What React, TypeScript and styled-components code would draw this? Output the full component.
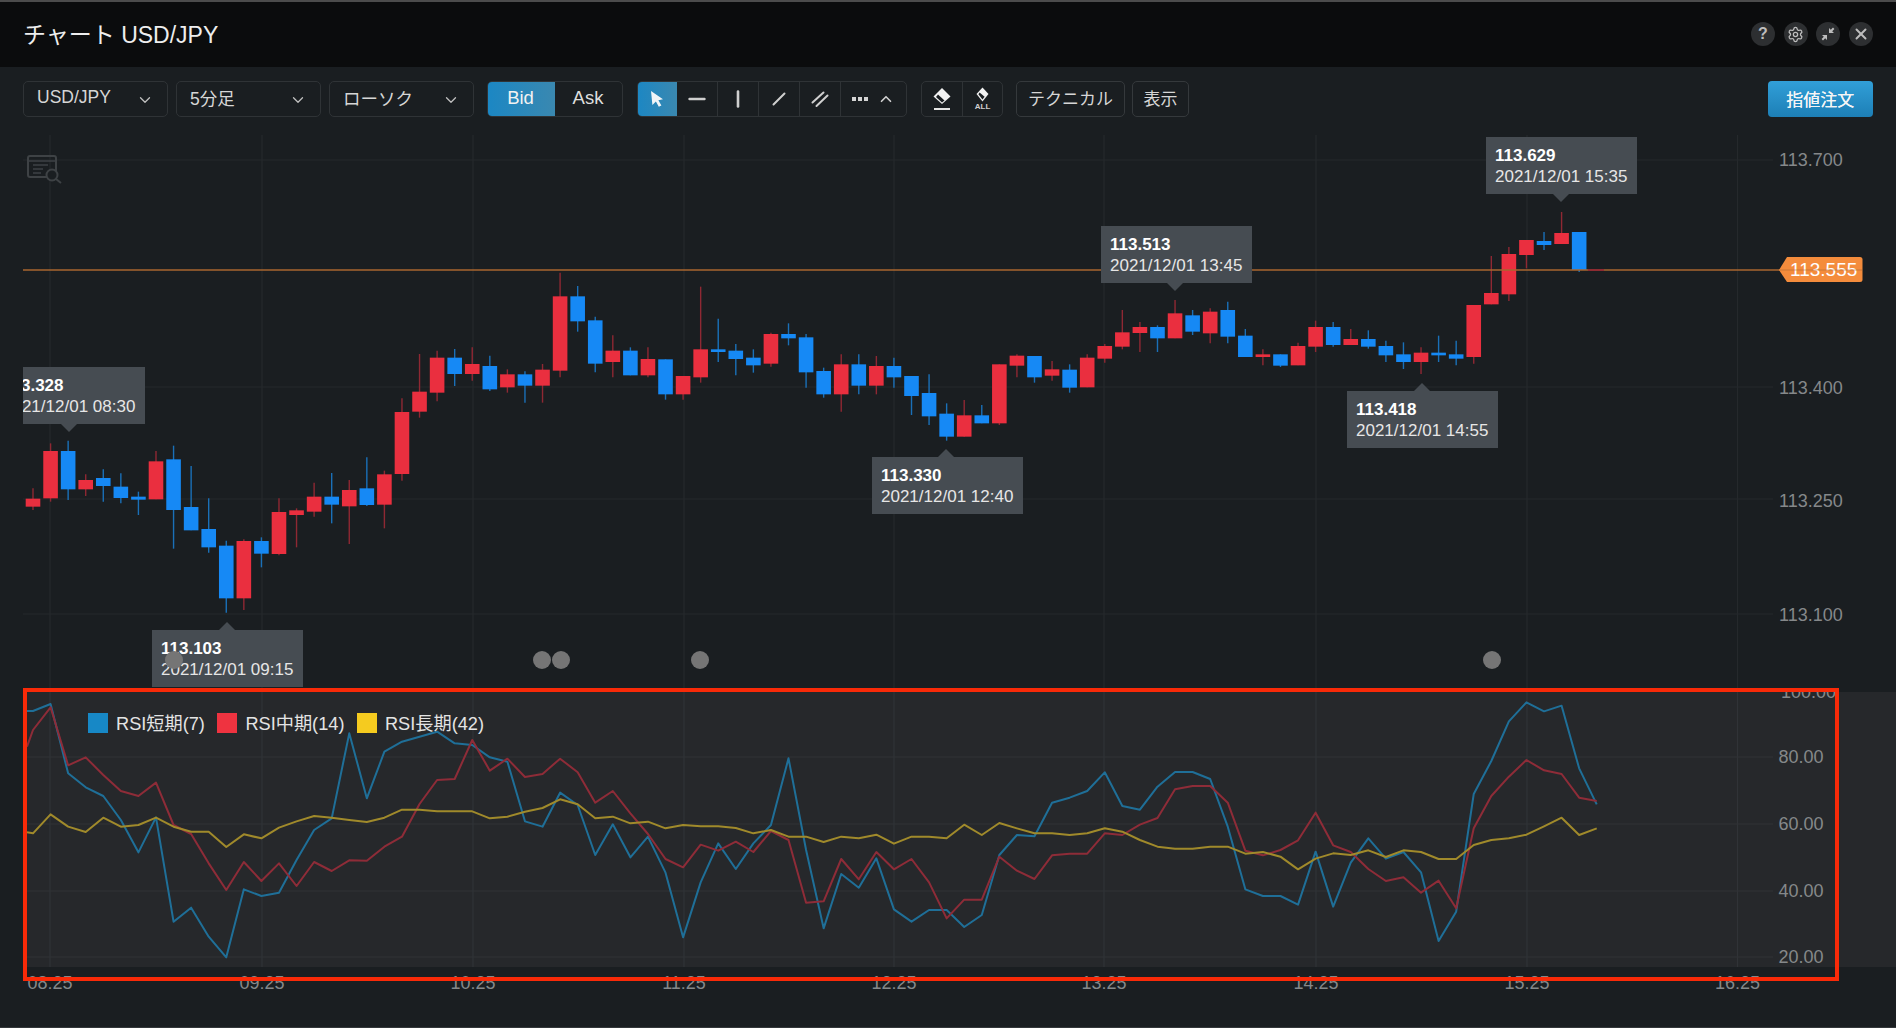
import React from 'react';
import styled, { createGlobalStyle } from 'styled-components';
import { ChevronDown, ChevronUp, Settings, X } from 'lucide-react';

const FONT = `"Liberation Sans", "Noto Sans CJK JP", sans-serif`;
const BG = '#1a1e21';

const Global = createGlobalStyle`
  html, body { margin: 0; padding: 0; background: ${BG}; }
  body { font-family: ${FONT}; overflow: hidden; }
`;

const Page = styled.div`
  width: 1896px; height: 1028px; display: flex; flex-direction: column;
  background: ${BG}; color: #ddd; box-sizing: border-box;
  border-bottom: 1px solid #34383b;
`;
const TitleBar = styled.header`
  height: 67px; flex: none; box-sizing: border-box; display: flex; align-items: center; justify-content: space-between;
  background: #0b0c0d; border-top: 2px solid #4c4c4c; padding: 0 24px 2px 23px;
`;
const Title = styled.h1`
  margin: 0 0 2px; font-size: 23px; font-weight: 400; color: #eee;
`;
const WindowActions = styled.div`
  display: flex; gap: 8.5px; margin: 1px -0.5px 0 0;
`;
const RoundBtn = styled.button`
  width: 24px; height: 24px; border-radius: 50%; border: 0; padding: 0; background: #2d2f31;
  color: #bdbdbd; display: flex; align-items: center; justify-content: center;
  font: 700 16px ${FONT};
`;

const Toolbar = styled.div`
  height: 50px; flex: none; box-sizing: border-box; padding: 14px 23px 0 23px;
  display: flex; gap: 14px; align-items: stretch;
`;
const SelectGroup = styled.div`display: flex; gap: 8px; margin-right: -1px;`;
const Select = styled.div`
  width: 145px; box-sizing: border-box; border: 1.5px solid #2f3336; border-radius: 5px;
  padding: 0 13px 3px; display: flex; align-items: center; justify-content: space-between;
  font-size: 17.5px; color: #d6d6d6;
  svg { margin-top: 4px; color: #c0c0c0; }
`;
const Segment = styled.div`
  display: flex; border: 1.5px solid #2f3336; border-radius: 5px; overflow: hidden; box-sizing: border-box;
`;
const SegBtn = styled.div<{ $w: number; $on?: boolean }>`
  width: ${p => p.$w}px; box-sizing: border-box; display: flex; align-items: center; justify-content: center;
  padding-bottom: 2px; font-size: 18.5px; color: ${p => (p.$on ? '#f2f2f2' : '#dedede')};
  background: ${p => (p.$on ? 'linear-gradient(90deg, #1b87c4, #3a88b0)' : 'transparent')};
  margin: ${p => (p.$on ? '-1.5px 0 -1.5px -1.5px' : '0')};
`;
const ToolBtn = styled.div<{ $w: number; $on?: boolean; $last?: boolean }>`
  width: ${p => p.$w}px; box-sizing: border-box; display: flex; align-items: center; justify-content: center;
  gap: 9px; color: #cfcfcf;
  background: ${p => (p.$on ? 'linear-gradient(90deg, #1b87c4, #3a88b0)' : 'transparent')};
  border-right: ${p => (p.$last || p.$on ? '0' : '1.5px solid #2f3336')};
  margin: ${p => (p.$on ? '-1.5px 0 -1.5px -1.5px' : '0')};
`;
const EraseStack = styled.div`
  display: flex; flex-direction: column; align-items: center; line-height: 1;
`;
const AllTag = styled.span`
  font-size: 8px; font-weight: 700; color: #cfcfcf; letter-spacing: 0; margin-top: 1px;
`;
const TextGroup = styled.div`display: flex; gap: 7px; margin-left: -1px;`;
const TextBtn = styled.div<{ $w: number }>`
  width: ${p => p.$w}px; box-sizing: border-box; border: 1.5px solid #35393c; border-radius: 5px;
  padding-bottom: 3px; display: flex; align-items: center; justify-content: center; font-size: 17px; color: #d6d6d6;
`;
const OrderBtn = styled.button`
  margin-left: auto; width: 105.5px; border: 0; border-radius: 4px; padding: 0 0 2px;
  background: linear-gradient(180deg, #319fd8, #1d7fb6); color: #f4f4f4; font: 400 17px ${FONT};
  text-shadow: 0 0 0.6px #fff;
`;

const ChartArea = styled.section`
  position: relative; flex: 1; display: flex; flex-direction: column;
`;
const MainPlot = styled.div`
  position: relative; height: 575px; flex: none;
  svg { display: block; }
`;
const PlotOverlay = styled.div`
  position: absolute; left: 23px; top: 0; right: 0; bottom: 0; overflow: hidden;
`;
const Tip = styled.div<{ $x: number; $y: number; $dir: 'up' | 'down'; $ax: number }>`
  position: absolute; left: ${p => p.$x - 23}px; top: ${p => p.$y - 117}px;
  width: 151px; height: 57px; box-sizing: border-box; padding: 8px 0 0 9px;
  background: #464c52; font-size: 17px; line-height: 21px; color: #e6e6e6; white-space: nowrap;
  &::after {
    content: ''; position: absolute; left: ${p => p.$ax - p.$x - 8}px;
    ${p => (p.$dir === 'up' ? 'top: -8px;' : 'bottom: -8px;')}
    border-left: 8px solid transparent; border-right: 8px solid transparent;
    ${p => (p.$dir === 'up' ? 'border-bottom: 8px solid #464c52;' : 'border-top: 8px solid #464c52;')}
  }
  b { display: block; color: #fff; font-weight: 700; }
`;
const Marker = styled.div<{ $x: number }>`
  position: absolute; left: ${p => p.$x - 32}px; top: ${660 - 117 - 9}px;
  width: 18px; height: 18px; border-radius: 50%; background: #757575;
`;

const RsiPanel = styled.div`
  position: relative; height: 275px; flex: none; margin-left: 23px; background: #26282b;
  svg { display: block; }
`;
const Legend = styled.div`
  position: absolute; left: 65px; top: 20px; display: flex; gap: 12.5px;
`;
const LegendItem = styled.div`
  display: flex; align-items: center; gap: 8px; font-size: 18.2px; color: #e4e4e4; height: 20px;
  padding-bottom: 1px;
`;
const Swatch = styled.i<{ $c: string }>`
  display: block; width: 20px; height: 20px; background: ${p => p.$c}; margin-top: 1px;
`;
const TimeAxis = styled.div`
  flex: 1; svg { display: block; }
`;
const Frame = styled.div`
  position: absolute; left: 22.5px; top: 571px; width: 1816.5px; height: 293px;
  box-sizing: border-box; border: 4.5px solid #f92a08; pointer-events: none;
`;

const GridLine = styled.line`stroke: #25292c; stroke-width: 1.2;`;
const RsiGrid = styled.line`stroke: #303337; stroke-width: 1.2;`;
const AxisText = styled.text`font: 400 18px ${FONT}; fill: #85888a;`;
const PriceLine = styled.line`stroke: #a9662f; stroke-width: 1.6;`;
const PriceTag = styled.text`font: 400 19px ${FONT}; fill: #fff;`;
const Poly = styled.polyline<{ $c: string }>`
  fill: none; stroke: ${p => p.$c}; stroke-width: 2; stroke-linejoin: round;
`;

type C = ['r' | 'b', number, number, number, number];
const candles: C[] = [
  ['r',716,740,685,750],['r',573,715,550,725],['b',573,688,542,720],['r',660,688,643,708],['b',654,678,628,725],
  ['b',680,714,640,730],['b',710,719,695,765],['r',604,718,573,718],['b',598,750,557,866],['b',741,811,618,811],
  ['b',807,862,715,878],['b',857,1015,842,1058],['r',843,1015,838,1050],['b',843,881,832,922],['r',756,882,715,886],
  ['r',751,765,745,862],['r',710,755,668,770],['b',710,734,639,790],['r',690,739,660,852],['b',685,735,592,738],
  ['r',643,734,632,805],['r',456,642,415,662],['r',395,455,282,473],['r',293,398,272,424],['b',293,342,267,378],
  ['r',312,342,262,362],['b',318,388,287,393],['r',343,382,328,398],['b',343,377,334,428],['r',329,377,312,428],
  ['r',109,332,38,352],['b',109,184,78,215],['b',181,311,170,337],['r',272,306,226,352],['b',272,346,262,346],
  ['r',297,346,262,352],['b',298,403,298,419],['r',348,403,348,419],['r',268,352,80,368],['b',268,276,176,306],
  ['b',272,297,252,346],['b',293,316,268,338],['r',222,311,218,320],['b',222,235,190,256],['b',232,337,222,383],
  ['b',333,403,323,413],['r',313,403,283,455],['b',313,377,283,403],['r',318,377,288,403],['b',318,352,293,383],
  ['b',348,408,348,465],['b',399,469,343,495],['b',461,530,430,542],['r',466,530,420,530],['b',466,490,435,490],
  ['r',313,490,313,495],['r',287,317,283,352],['b',288,352,288,368],['r',328,347,303,362],['b',329,383,313,398],
  ['r',293,382,283,382],['r',258,296,252,308],['r',217,260,150,268],['r',201,219,186,276],['b',201,235,196,276],
  ['r',160,235,120,235],['b',166,215,150,225],['r',155,220,145,250],['b',150,230,125,250],['b',227,291,207,291],
  ['r',283,291,268,316],['b',283,317,283,321],['r',258,316,248,316],['r',201,260,182,276],['b',201,255,186,260],
  ['r',237,255,207,255],['b',237,260,211,266],['b',258,286,242,306],['b',283,306,247,327],['r',278,306,262,342],
  ['b',278,286,227,306],['b',283,296,242,316],['r',135,291,135,311],['r',99,133,-12,133],['r',-18,103,-39,123],
  ['r',-60,-15,-60,25],['b',-57,-45,-84,-30],['r',-81,-48,-144,-48],['b',-84,30,-84,36],
];

const cx = (i: number) => 33 + 17.57 * i;
const cy = (v: number) => 260 + v / 3;

const blue = [93,72,280,322,348,420,517,412,725,683,770,832,628,648,638,540,450,415,160,355,215,185,170,155,190,195,232,245,424,440,338,375,525,433,532,470,578,772,
  607,490,567,490,435,235,510,745,582,623,535,688,725,690,690,741,705,525,465,469,368,353,333,277,378,389,320,276,276,297,440,628,648,
  648,674,515,680,548,475,536,516,577,783,695,342,243,124,67,94,77,265,373];
const red = [150,82,256,232,285,333,348,308,435,462,550,630,546,603,550,618,546,573,541,542,500,470,372,300,297,180,272,236,291,282,236,277,368,333,400,462,537,562,
  494,512,485,516,453,480,668,664,537,598,516,568,537,607,715,659,659,530,572,597,526,521,521,460,465,434,414,328,318,318,368,512,526,
  510,481,398,496,516,567,603,592,638,602,685,445,348,290,240,271,282,353,363];
const yellow = [460,403,440,456,413,440,435,413,440,455,455,501,463,475,443,424,408,413,420,426,413,389,389,394,394,394,415,410,395,384,358,373,415,410,430,425,445,435,
  439,439,444,460,450,470,470,486,470,475,464,491,470,470,475,434,465,429,445,460,460,465,460,445,455,480,500,506,506,500,500,521,516,
  530,568,536,520,525,511,531,511,516,537,537,495,480,475,464,439,413,465,445];

const series = (vals: number[], first: number) =>
  `27,${680 + first / 3} ` + vals.map((v, i) => `${cx(i)},${680 + v / 3}`).join(' ');

const timeXs: [string, number][] = [
  ['08:25', 50], ['09:25', 262], ['10:25', 473], ['11:25', 684], ['12:25', 894],
  ['13:25', 1104], ['14:25', 1316], ['15:25', 1527], ['16:25', 1737.5],
];
const mainRows = [160, 387, 499, 614];
const prices: [string, number][] = [['113.700', 159], ['113.400', 387], ['113.250', 500], ['113.100', 614]];
const rsiRows: [string, number, number][] = [['80.00', 757, 756], ['60.00', 824, 823], ['40.00', 891, 890], ['20.00', 957, 956]];

const tips = [
  { x: -6, y: 367, dir: 'down', ax: 69, p: '113.328', t: '2021/12/01 08:30' },
  { x: 152, y: 630, dir: 'up', ax: 227, p: '113.103', t: '2021/12/01 09:15' },
  { x: 872, y: 457, dir: 'up', ax: 946, p: '113.330', t: '2021/12/01 12:40' },
  { x: 1101, y: 226, dir: 'down', ax: 1175, p: '113.513', t: '2021/12/01 13:45' },
  { x: 1486, y: 137, dir: 'down', ax: 1560.6, p: '113.629', t: '2021/12/01 15:35' },
  { x: 1347, y: 391, dir: 'up', ax: 1422, p: '113.418', t: '2021/12/01 14:55' },
] as const;

const CompressIcon = () => (
  <svg width="16" height="16" viewBox="0 0 16 16" fill="#bdbdbd">
    <path d="M9 7V2l1.8 1.8L13 1.6l1.4 1.4-2.2 2.2L14 7z" />
    <path d="M7 9v5l-1.8-1.8L3 14.4 1.6 13l2.2-2.2L2 9z" />
  </svg>
);
const CursorIcon = () => (
  <svg width="16" height="18" viewBox="0 0 16 18" fill="#f0f4f7">
    <path d="M2 1l12 8.2-4.6 1 3 5.2-2.6 1.4-2.9-5.3L3.4 15z" />
  </svg>
);
const LineIcon = ({ d, w = 2.4 }: { d: string; w?: number }) => (
  <svg width="18" height="18" viewBox="0 0 18 18" fill="none" stroke="#cfcfcf" strokeWidth={w} strokeLinecap="round">
    <path d={d} />
  </svg>
);
const DotsIcon = () => (
  <svg width="16" height="6" viewBox="0 0 16 6" fill="#d4d4d4">
    <rect x="0" y="1" width="4" height="4" /><rect x="6" y="1" width="4" height="4" /><rect x="12" y="1" width="4" height="4" />
  </svg>
);
const EraserIcon = () => (
  <svg width="20" height="24" viewBox="0 0 20 24">
    <path d="M10 1l8.5 8.5L10 17 1.5 9.5z" fill="#f2f2f2" />
    <path d="M6 7.5l6.5 6L10 15.5 4 10z" fill="#1a1e21" />
    <rect x="2" y="21" width="16" height="2" fill="#e4e4e4" />
  </svg>
);
const SmallEraser = () => (
  <svg width="15" height="15" viewBox="0 0 15 15">
    <path d="M7.5 0.5l6 6.5-6 7.5-6-7.5z" fill="#f2f2f2" />
    <path d="M4.6 5.6l5 4.2-2.1 2.6L3.4 7.3z" fill="#1a1e21" />
  </svg>
);

export default function App() {
  return (
    <Page>
      <Global />
      <TitleBar>
        <Title>チャート USD/JPY</Title>
        <WindowActions>
          <RoundBtn>?</RoundBtn>
          <RoundBtn><Settings size={17} strokeWidth={1.8} /></RoundBtn>
          <RoundBtn><CompressIcon /></RoundBtn>
          <RoundBtn><X size={18} strokeWidth={2.6} /></RoundBtn>
        </WindowActions>
      </TitleBar>

      <Toolbar>
        <SelectGroup>
          {['USD/JPY', '5分足', 'ローソク'].map(s => (
            <Select key={s}>{s}<ChevronDown size={18} strokeWidth={1.7} /></Select>
          ))}
        </SelectGroup>
        <Segment>
          <SegBtn $w={68} $on>Bid</SegBtn>
          <SegBtn $w={67}>Ask</SegBtn>
        </Segment>
        <Segment>
          <ToolBtn $w={41} $on><CursorIcon /></ToolBtn>
          <ToolBtn $w={41}><LineIcon d="M1.5 9h15" /></ToolBtn>
          <ToolBtn $w={41}><LineIcon d="M9 1.5v15" w={2.6} /></ToolBtn>
          <ToolBtn $w={41}><LineIcon d="M3.5 14.5l11-11" w={2} /></ToolBtn>
          <ToolBtn $w={41}><LineIcon d="M1.5 12.5l11-10M5.5 16l11-10.5" w={2} /></ToolBtn>
          <ToolBtn $w={65} $last><DotsIcon /><ChevronUp size={18} strokeWidth={2.2} /></ToolBtn>
        </Segment>
        <Segment>
          <ToolBtn $w={41}><EraserIcon /></ToolBtn>
          <ToolBtn $w={39} $last>
            <EraseStack><SmallEraser /><AllTag>ALL</AllTag></EraseStack>
          </ToolBtn>
        </Segment>
        <TextGroup>
          <TextBtn $w={109}>テクニカル</TextBtn>
          <TextBtn $w={57}>表示</TextBtn>
        </TextGroup>
        <OrderBtn>指値注文</OrderBtn>
      </Toolbar>

      <ChartArea>
        <MainPlot>
          <svg width="1896" height="575" viewBox="0 117 1896 575">
            {timeXs.map(([k, x]) => <GridLine key={k} x1={x} x2={x} y1={135} y2={692} />)}
            {mainRows.map(y => <GridLine key={y} x1={23} x2={1773} y1={y} y2={y} />)}

            <g fill="none" stroke="#3e4245" strokeWidth="2">
              <rect x="28" y="156" width="28" height="21" rx="2" />
              <path d="M28 161h28M33 165h15M33 169h10M33 173h8" strokeWidth="1.6" />
              <circle cx="52" cy="175" r="5.5" fill={BG} />
              <path d="M56 179l5 4" />
            </g>

            {candles.map(([c, t, b, wt, wb], i) => {
              const x = cx(i);
              return (
                <g key={i}>
                  <line x1={x} x2={x} y1={cy(wt)} y2={cy(wb)} stroke={c === 'r' ? '#8f2833' : '#1a70b8'} strokeWidth="1.4" />
                  <rect x={x - 7.3} width={14.6} y={cy(t)} height={(b - t) / 3} fill={c === 'r' ? '#ea2f3f' : '#1689f5'} />
                </g>
              );
            })}

            <PriceLine x1={23} x2={1780} y1={270} y2={270} />
            <line x1={1588} x2={1604} y1={270} y2={270} stroke="#8f2833" strokeWidth="1.8" />
            <path d="M1779 270l8-13h73a2.5 2.5 0 0 1 2.5 2.5v20a2.5 2.5 0 0 1-2.5 2.5h-73z" fill="#f48c3c" />
            <PriceTag x={1790} y={276}>113.555</PriceTag>
            <line x1={1780} x2={1862} y1={270} y2={270} stroke="#a9662f" strokeWidth="1" opacity="0.55" />

            {prices.map(([l, y]) => <AxisText key={l} x={1779} y={y + 6.5}>{l}</AxisText>)}
          </svg>
          <PlotOverlay>
            {tips.map(t => (
              <Tip key={t.p} $x={t.x} $y={t.y} $dir={t.dir} $ax={t.ax}>
                <b>{t.p}</b>{t.t}
              </Tip>
            ))}
            {[174, 542, 561, 700, 1491.5].map(x => <Marker key={x} $x={x} />)}
          </PlotOverlay>
        </MainPlot>

        <RsiPanel>
          <svg width="1873" height="275" viewBox="23 692 1873 275">
            {timeXs.map(([k, x]) => <RsiGrid key={k} x1={x} x2={x} y1={692} y2={967} />)}
            {rsiRows.map(([l, y]) => <RsiGrid key={l} x1={23} x2={1773} y1={y} y2={y} />)}
            <Poly $c="#1f6f98" points={series(blue, 93)} />
            <Poly $c="#8e2c38" points={series(red, 200)} />
            <Poly $c="#a08a2b" points={series(yellow, 457)} />
            {rsiRows.map(([l, , c]) => <AxisText key={l} x={1778.5} y={c + 6.5}>{l}</AxisText>)}
            <AxisText x={1781} y={698}>100.00</AxisText>
          </svg>
          <Legend>
            <LegendItem><Swatch $c="#1788c6" />RSI短期(7)</LegendItem>
            <LegendItem><Swatch $c="#ef3340" />RSI中期(14)</LegendItem>
            <LegendItem><Swatch $c="#f5cb1f" />RSI長期(42)</LegendItem>
          </Legend>
        </RsiPanel>

        <TimeAxis>
          <svg width="1896" height="60" viewBox="0 967 1896 60">
            {timeXs.map(([k, x]) => <AxisText key={k} x={x} y={988.5} textAnchor="middle">{k}</AxisText>)}
          </svg>
        </TimeAxis>
        <Frame />
      </ChartArea>
    </Page>
  );
}
